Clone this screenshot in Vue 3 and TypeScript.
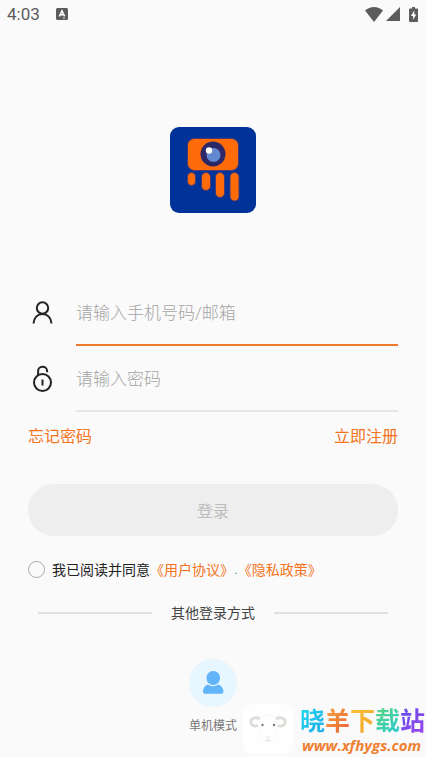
<script setup lang="ts">
import { ref } from 'vue'

const account = ref('')
const password = ref('')
const agreed = ref(false)
</script>

<template>
  <div class="screen">
    <header class="status">
      <span class="clock">4:03</span>
      <svg class="badge" viewBox="0 0 12 12" aria-hidden="true">
        <rect width="12" height="12" rx="1.5" fill="#5c5c5c" />
        <path d="M3.4 8.4 6 2.8l2.6 5.6M4.4 6.8h3.2" fill="none" stroke="#fff" stroke-width="1.5" />
        <path d="M7 10.2h2" stroke="#ddd" stroke-width="1" />
      </svg>
      <div class="signals">
        <svg width="18" height="15" viewBox="0 0 18 15" aria-hidden="true">
          <path d="M0 3.6C2.6 1.3 5.700 0 9 0s6.400 1.300 9 3.600L9 15z" fill="#5c5c5c" />
        </svg>
        <svg width="14" height="14" viewBox="0 0 14 14" aria-hidden="true">
          <path d="M14 0v14H0z" fill="#5c5c5c" />
        </svg>
        <svg class="battery" width="9" height="15" viewBox="0 0 9 15" aria-hidden="true">
          <path d="M3 0h3v1.500h2a1 1 0 0 1 1 1V14a1 1 0 0 1-1 1H1a1 1 0 0 1-1-1V2.500a1 1 0 0 1 1-1h2z" fill="#5c5c5c" />
          <path d="M5.300 3.600 1.900 9h2.200v3.700L7.300 7.500H5.300z" fill="#fff" />
        </svg>
      </div>
    </header>

    <main class="content">
      <svg class="logo" viewBox="0 0 86 86" role="img" aria-label="logo">
        <rect width="86" height="86" rx="9" fill="#003399" />
        <g fill="#ff6b08" stroke="#4b3a70" stroke-width="1">
          <rect x="17.500" y="11.500" width="51" height="32" rx="7" />
          <rect x="17.500" y="45.500" width="8" height="13" rx="4" />
          <rect x="31.500" y="45.500" width="9" height="18" rx="4.500" />
          <rect x="45.500" y="45.500" width="9" height="25" rx="4.500" />
          <rect x="60" y="45.500" width="9" height="28.500" rx="4.500" />
        </g>
        <circle cx="43" cy="27" r="12.500" fill="#2c2868" />
        <circle cx="43.500" cy="28" r="7" fill="#6289cf" />
        <circle cx="39" cy="23.500" r="3.200" fill="#fff" />
      </svg>

      <form class="form" @submit.prevent>
        <div class="field">
          <label for="account" aria-label="手机号码/邮箱">
            <svg width="28" height="28" viewBox="0 0 28 28" fill="none" stroke="#222" stroke-width="2">
              <circle cx="14.500" cy="9" r="5.700" />
              <path d="M5.500 24.500c.3-5.600 4-9.500 9-9.500s8.700 3.900 9 9.500" />
            </svg>
          </label>
          <input id="account" v-model="account" class="active" type="text" placeholder="请输入手机号码/邮箱" />
        </div>
        <div class="field">
          <label for="password" aria-label="密码">
            <svg width="28" height="28" viewBox="0 0 28 28" fill="none" stroke="#222" stroke-width="2">
              <circle cx="14.500" cy="17.500" r="8.500" />
              <path d="M10.100 10V6.500a4.500 4.500 0 0 1 9-.6v1.300" />
              <path d="M14.500 14.500v6" />
            </svg>
          </label>
          <input id="password" v-model="password" type="password" placeholder="请输入密码" />
        </div>
        <nav class="links">
          <a href="#forgot">忘记密码</a>
          <a href="#register">立即注册</a>
        </nav>
        <button class="submit" type="submit" disabled>登录</button>
        <div class="agree">
          <input id="agree" v-model="agreed" type="checkbox" />
          <label for="agree">我已阅读并同意</label>
          <a href="#terms">《用户协议》</a><span class="dot">.</span><a href="#privacy">《隐私政策》</a>
        </div>
      </form>

      <div class="divider"><span>其他登录方式</span></div>

      <button class="local" type="button">
        <svg width="48" height="48" viewBox="0 0 48 48" aria-hidden="true">
          <circle cx="24" cy="24" r="24" fill="#e8f6ff" />
          <g fill="#62b5f8">
            <rect x="17.500" y="12" width="13.500" height="14" rx="6.500" />
            <path d="M19 25.500c2.500 2.300 7.500 2.300 10 0 3.500 1 5.500 3.800 5.500 7 0 1.500-.8 2.300-2.300 2.300H16.300c-1.500 0-2.300-.8-2.300-2.300 0-3.200 1.700-6 5-7z" />
          </g>
        </svg>
        <span>单机模式</span>
      </button>
    </main>

    <aside class="mark">
      <svg width="50" height="50" viewBox="0 0 50 50" aria-hidden="true">
        <rect width="50" height="50" rx="9" fill="#fefefe" />
        <g fill="none" stroke="#dededb" stroke-width="3">
          <path d="M17 15c-5-3-10 0-9 4 1 3 5 4 7 2" />
          <path d="M33 15c5-3 10 0 9 4-1 3-5 4-7 2" />
        </g>
        <g stroke="#f8f8f6" fill="none">
          <path d="M17 14c3-4 13-4 16 0M16 25c1 7 4 13 9 13s8-6 9-13" />
        </g>
        <circle cx="19.500" cy="21" r="1.200" fill="#777" />
        <circle cx="31" cy="21" r="1.200" fill="#777" />
        <path d="M22.500 32.500 25 34l2.500-1.500M25 34v2.500M22.500 36.500h5" fill="none" stroke="#e2e2e2" />
      </svg>
      <div class="words">
        <div class="site">
          <span class="c1">晓</span><span class="c2">羊</span><span class="c3">下</span><span class="c4">载</span><span class="c5">站</span>
        </div>
        <div class="url">www.xfhygs.com</div>
      </div>
    </aside>
  </div>
</template>

<style>
body {
  margin: 0;
  background: #fafafa;
}
</style>

<style scoped>
.screen {
  position: relative;
  box-sizing: border-box;
  min-height: 100vh;
  background: #fafafa;
  color: #222;
  font-family: Roboto, "Noto Sans CJK SC", sans-serif;
  font-size: 14px;
}
input,
button {
  font-family: inherit;
}
a {
  color: #f5731c;
  text-decoration: none;
}
svg {
  display: block;
}
.status {
  display: flex;
  align-items: center;
  height: 28px;
  padding: 0 8px 0 7px;
}
.clock {
  color: #5c5c5c;
  font-size: 17px;
  line-height: 28px;
}
.badge {
  width: 12px;
  height: 12px;
  margin-left: 16px;
}
.signals {
  display: flex;
  align-items: center;
  gap: 3px;
  margin-left: auto;
}
.battery {
  margin-left: 6px;
}
.content {
  display: flex;
  flex-direction: column;
  align-items: center;
  padding: 99px 28px 24px;
}
.logo {
  width: 86px;
  height: 86px;
}
.form {
  width: 100%;
  margin-top: 67px;
}
.field {
  display: flex;
  height: 66px;
}
.field label {
  display: flex;
  align-items: center;
  width: 48px;
}
.field input {
  flex: 1;
  min-width: 0;
  padding: 2px 0 0;
  border: 0;
  border-bottom: 2px solid #e6e6e6;
  outline: 0;
  background: transparent;
  color: #222;
  font-size: 17px;
  font-weight: 300;
}
.field input.active {
  border-color: #ee7a2c;
}
.field input::placeholder {
  color: #a4a4a4;
  opacity: 1;
}
.links {
  display: flex;
  justify-content: space-between;
  margin-top: 12px;
  font-size: 16px;
  line-height: 26px;
}
.submit {
  width: 100%;
  height: 52px;
  margin-top: 34px;
  border: 0;
  border-radius: 26px;
  background: #eee;
  color: #bcbcbc;
  font-size: 16px;
}
.agree {
  display: flex;
  align-items: center;
  height: 24px;
  margin-top: 21px;
  white-space: nowrap;
}
.agree input {
  appearance: none;
  width: 17px;
  height: 17px;
  margin: 0 7px 0 0;
  border: 1px solid #aaa;
  border-radius: 50%;
}
.agree input:checked {
  background: #f5731c;
}
.dot {
  color: #5aa;
}
.divider {
  display: flex;
  align-items: center;
  gap: 19px;
  box-sizing: border-box;
  width: 100%;
  margin-top: 20px;
  padding: 0 10px;
  color: #444;
  line-height: 24px;
}
.divider::before,
.divider::after {
  flex: 1;
  height: 2px;
  background: #e0e0e0;
  content: "";
}
.local {
  display: flex;
  flex-direction: column;
  align-items: center;
  gap: 9px;
  margin-top: 34px;
  padding: 0;
  border: 0;
  background: transparent;
  color: #777;
  font-size: 12px;
}
.mark {
  position: absolute;
  right: 1px;
  bottom: 3px;
  display: flex;
  align-items: flex-end;
  gap: 7px;
}
.site {
  display: flex;
  font-size: 25px;
  font-weight: 700;
  line-height: 28px;
}
.site span {
  background-clip: text;
  color: transparent;
}
.site .c1 {
  background-image: linear-gradient(135deg, #20d8f0, #25a9e8);
}
.site .c2 {
  background-image: linear-gradient(135deg, #f5a03c, #ed5f38);
}
.site .c3 {
  background-image: linear-gradient(135deg, #f6c333, #f3a02d);
}
.site .c4 {
  background-image: linear-gradient(135deg, #58d77c, #28c8dc);
}
.site .c5 {
  background-image: linear-gradient(135deg, #5d50ee, #a044ed);
}
.url {
  padding-left: 2px;
  color: #f08032;
  font-family: "Open Sans", sans-serif;
  font-size: 15px;
  font-style: italic;
  font-weight: 700;
  line-height: 18px;
}
</style>
